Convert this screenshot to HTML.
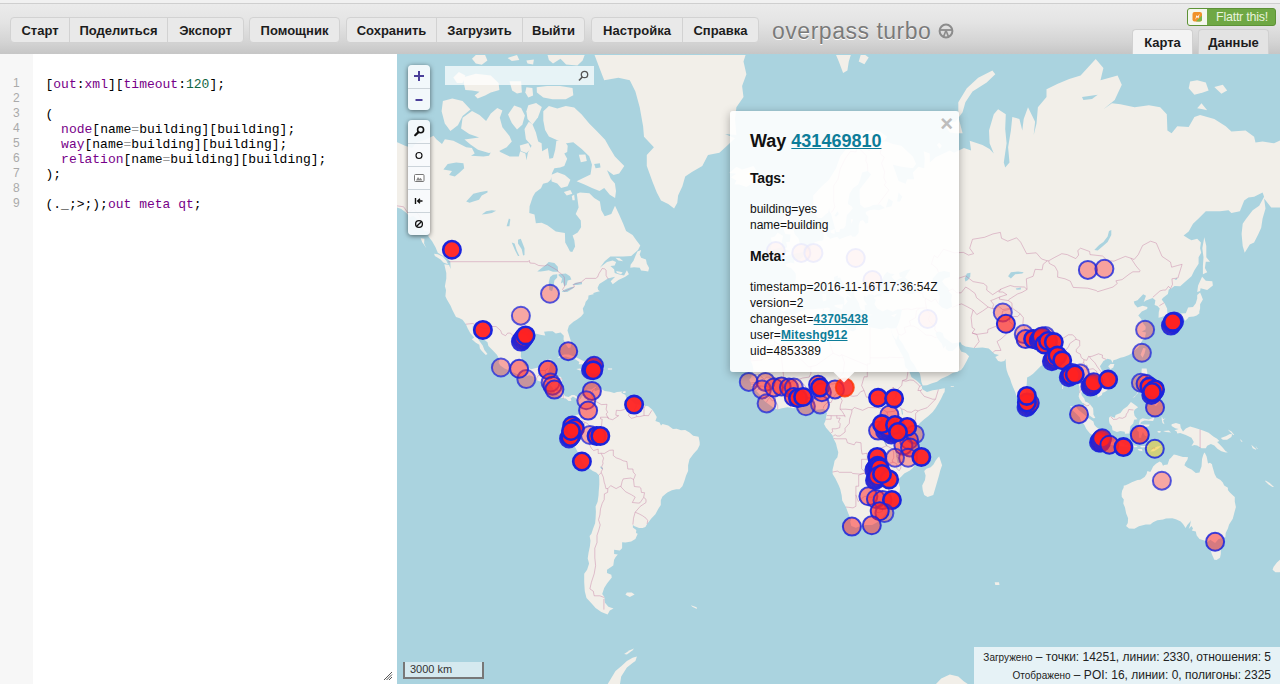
<!DOCTYPE html>
<html lang="ru"><head><meta charset="utf-8"><title>overpass turbo</title>
<style>
*{box-sizing:border-box;margin:0;padding:0}
html,body{width:1280px;height:684px;overflow:hidden;background:#fff;font-family:"Liberation Sans",sans-serif;}
#hdr{position:absolute;left:0;top:0;width:1280px;height:54px;background:linear-gradient(#f1f1f1 0,#f1f1f1 3px,#cfcfcf 3px,#cfcfcf 4px,#ebebeb 4px,#e4e4e4 22px,#d4d4d4 42px,#c6c6c6 54px);}
.grp{position:absolute;top:17px;height:26px;display:flex;border:1px solid #d2d2d2;border-radius:4px;background:#e9e9e9;overflow:hidden}
.grp div{height:24px;line-height:25px;font-size:13px;font-weight:bold;color:#1c1c1c;text-align:center;border-left:1px solid #d2d2d2;white-space:nowrap}
.grp div:first-child{border-left:0}
#ttl{position:absolute;left:772px;top:16.8px;font-size:23px;line-height:28px;color:#7a7a7a;text-shadow:0 1px 0 #fff;letter-spacing:0.52px;white-space:nowrap}
#flattr{position:absolute;left:1187px;top:8px;width:89px;height:18px;border-radius:3px;background:#6fa844;border:1px solid #5d9236;overflow:hidden}
#flattr .ic{position:absolute;left:0;top:0;width:19px;height:16px;background:#f4f7ee}
#flattr span{position:absolute;left:21px;top:0;width:66px;transform:scaleX(.96);text-align:center;font-size:13px;line-height:16px;color:#e9f3dd;white-space:nowrap;letter-spacing:-0.25px}
.tab{position:absolute;top:29px;height:25px;border-radius:4px 4px 0 0;font-size:13px;font-weight:bold;line-height:25px;text-align:center;color:#1c1c1c;border:1px solid #d0d0d0;border-bottom:0}
#ed{position:absolute;left:0;top:54px;width:397px;height:630px;background:#fff}
#gut{position:absolute;left:0;top:0;width:33px;height:630px;background:#f7f7f7}
#ln{position:absolute;left:0;top:22px;width:33px;font-size:12px;line-height:15px;color:#aaa;white-space:pre;font-family:"Liberation Sans",sans-serif}
#ln div{padding-left:13px}
#code{position:absolute;left:45.5px;top:22.7px;font-family:"Liberation Mono",monospace;font-size:13px;line-height:15px;color:#000;white-space:pre}
.k{color:#708}.n{color:#164}.o{color:#999}
#map{position:absolute;left:397px;top:54px;width:883px;height:630px;background:#aad3df;overflow:hidden}
#map svg.m{position:absolute;left:0;top:0}
.ctl{position:absolute;left:11px;width:22px;border-radius:4px;background:rgba(248,251,253,0.92);box-shadow:0 1px 5px rgba(0,0,0,0.55)}
.ctl div{height:22.5px;border-top:1px solid #ccd4da;position:relative}
.ctl div:first-child{border-top:0}.c2 div{height:23px}
#srch{position:absolute;left:48px;top:11px;width:149px;height:19px;background:rgba(255,255,255,0.72)}
#scale{position:absolute;left:6px;top:607px;width:81px;height:17px;border:2px solid #777;border-top:0;background:rgba(255,255,255,0.5);font-size:11px;line-height:15px;padding-left:5px;color:#333}
#stats{position:absolute;right:0;bottom:0;width:306px;height:37px;background:rgba(255,255,255,0.7);font-size:12px;color:#222;text-align:right;padding:2px 9px 0 0;line-height:17.5px;white-space:nowrap}
#stats small{font-size:10px}
#pop{position:absolute;left:333px;top:56px;width:229px;height:261px;background:rgba(255,255,255,0.9);border-radius:3px;box-shadow:0 2px 10px rgba(0,0,0,0.3);color:#111;font-size:12px;line-height:16px}
#pop h2{position:absolute;left:20px;top:18.6px;font-size:18px;line-height:22px;font-weight:bold;letter-spacing:0px;white-space:nowrap}
#pop h3{position:absolute;left:20px;font-size:14px;line-height:16px;font-weight:bold;letter-spacing:-0.2px}
#pop a{color:#0d7d99;font-weight:bold;text-decoration:underline}
#pop p{position:absolute;left:20px;white-space:nowrap}
#pop .x{position:absolute;right:6px;top:4.5px;font-size:22px;font-weight:bold;color:#bdbdbd;line-height:16px}
#tip{position:absolute;left:437px;top:317px;width:20px;height:10px;overflow:hidden}
#tip i{position:absolute;left:3px;top:-7px;width:14px;height:14px;background:rgba(255,255,255,0.9);transform:rotate(45deg);box-shadow:0 3px 14px rgba(0,0,0,0.4)}
</style></head><body>
<div id="hdr">
 <div class="grp" style="left:10px"><div style="width:58px">Старт</div><div style="width:98px">Поделиться</div><div style="width:76px">Экспорт</div></div>
 <div class="grp" style="left:249px"><div style="width:89px">Помощник</div></div>
 <div class="grp" style="left:346px"><div style="width:89px">Сохранить</div><div style="width:86px">Загрузить</div><div style="width:62px">Выйти</div></div>
 <div class="grp" style="left:591px"><div style="width:90px">Настройка</div><div style="width:76px">Справка</div></div>
 <div id="ttl">overpass turbo</div>
 <svg style="position:absolute;left:937px;top:22px" width="18" height="18" viewBox="0 0 18 18"><circle cx="9" cy="9" r="6.4" fill="none" stroke="#8c8c8c" stroke-width="2"/><path d="M3 8h12" stroke="#8c8c8c" stroke-width="1.8" fill="none"/><path d="M9 8.5L6.6 14.5M9 8.5L11.4 14.5" stroke="#8c8c8c" stroke-width="1.7" fill="none"/></svg>
 <div id="flattr"><div class="ic"><svg width="19" height="16" viewBox="0 0 19 16"><rect x="4.5" y="3" width="9.5" height="9.5" rx="2" fill="#f0912a"/><path d="M14 6.5v4a2 2 0 0 1-2 2H8z" fill="#7ab648"/><path d="M7.3 10.8L8.4 6.2L9.8 7.6L11.6 4.8L10.4 9.4L9 8z" fill="#fff"/></svg></div><span>Flattr this!</span></div>
 <div class="tab" style="left:1132px;width:61px;background:#f3f3f3">Карта</div>
 <div class="tab" style="left:1198px;width:71px;background:#e3e3e3">Данные</div>
</div>
<div id="ed"><div id="gut"></div>
<div id="ln"><div>1</div><div>2</div><div>3</div><div>4</div><div>5</div><div>6</div><div>7</div><div>8</div><div>9</div></div>
<div id="code">[<span class="k">out</span>:<span class="k">xml</span>][<span class="k">timeout</span>:<span class="n">120</span>];

(
  <span class="k">node</span>[name<span class="o">=</span>building][building];
  <span class="k">way</span>[name<span class="o">=</span>building][building];
  <span class="k">relation</span>[name<span class="o">=</span>building][building];
);

(._;&gt;;);<span class="k">out</span> <span class="k">meta</span> <span class="k">qt</span>;</div>
<svg style="position:absolute;left:383px;top:617px" width="10" height="10" viewBox="0 0 10 10"><path d="M1 9L9 1M3.5 9L9 3.5M6 9L9 6" stroke="#555" stroke-width="1" fill="none"/></svg>
</div>
<div id="map"><div style="position:absolute;left:0;top:1px;width:883px;height:629px">
<svg class="m" width="883" height="629" viewBox="0 0 883 629"><g fill="#f2efe9"><path d="M-75.9,114.6 -58.8,107.5 -67.3,96.2 -44.6,73.9 -30.4,77.4 -13.3,82.5 0.9,87.5 8,90.7 15.2,93.1 19.4,87.5 29.4,84.2 36.5,80.8 39.3,84.2 45,89.1 47.9,84.2 56.4,85.8 69.2,92.3 74.9,93.1 77.7,98.5 74,100.8 86.3,101.6 92,100.8 94.8,95.4 100.5,93.9 103.3,97 112.7,101.6 121.8,101.6 123.2,96.2 128.4,98.5 129.5,105.3 130.9,97.8 134.6,90.7 128.9,84.2 127.5,73.9 131.8,66.7 135.5,69.4 138.9,77.4 141.2,86.6 144.6,88.3 145.1,96.2 150.8,93.1 152.3,103.8 156,103.1 158.2,94.7 159.4,85.8 167.3,85.8 170.7,90.7 170.2,97 167.3,98.5 170.2,103.8 167.3,111.1 163.1,112.5 157.4,113.2 155.1,118.1 153.7,124.8 150.8,127.4 146,128.7 144,133.2 138.3,137.6 135.8,141.8 132.6,151.2 132.3,158 137.5,159.6 138.9,168.2 144.6,167.7 150.3,170.3 158.8,176.4 167.9,177.9 168.2,187.6 170.7,191.9 173,196.5 175.3,196.9 178.1,191.4 177.3,185.2 175.6,180.4 180.7,177.4 184.1,172.3 183.8,165.6 178.7,159.1 181.6,152.4 179.8,138.8 183,137.6 192.4,138.2 197.2,143 202.9,146.6 204.3,155.2 207.7,161.3 214.3,159.1 218,150.7 221.9,159.1 226.2,168.7 229.1,175.9 235.6,179.9 239.3,185.2 243.3,190.5 241,195.1 234.2,201 226.2,201.4 213.4,201.4 207.7,206.2 202.9,212.7 200,215.6 204.3,211.4 210,207.1 215.7,205.4 219.1,207.1 217.7,210.5 213.4,211 217.1,214.3 217.7,218.1 221.4,219.3 227.1,220.5 229.9,215.2 231.9,219.3 227.9,222.1 221.4,225 215.7,229.3 213.7,226.2 218.2,221.7 214.8,222.6 210.9,223.4 206.3,226.6 202.3,228.9 200.6,232.8 201.2,235.1 202.9,236.3 199.5,237 195.8,238.2 197.2,238.9 191.5,240.4 191.2,243.8 188.7,246.7 187.8,250 185.8,253.6 186.7,258.2 184.1,261.6 180.1,264.4 176.4,266.8 171.9,270.8 170.5,275.5 172.7,282.4 174.4,287.8 173.6,292.6 171.3,292.9 169.3,290.1 166.5,284.6 166.8,280.7 163.6,277.5 158.8,278.5 155.7,276.2 151.1,276.2 147.1,276.8 148.3,280.4 144.3,280.1 139.7,278.8 135.2,278.5 131.5,280.4 126.1,284.3 125.2,289.1 124.1,295.1 123.8,301.6 125.5,306.5 128.1,311 131.8,313.1 134.1,314.3 138.9,313.1 142.3,312.5 144.6,308.9 145.1,305.9 150.3,304.4 154.5,304.4 155.1,306.5 153.1,309.8 152.3,314 150.8,317 149.4,321.2 152.3,321.5 157.4,321.5 163.1,321.5 165.3,323.8 164.5,328.2 164.2,332.6 163.9,335.5 165.9,338.4 168.2,341.3 171.6,341.9 174.7,340.1 177.3,339.9 180.7,341.9 182.1,342.4 183,344.7 180.4,346.5 179.3,343.6 175.9,341.6 173.6,343.6 174.4,345.9 171.6,345.9 168.8,343.6 165.9,343.3 163.9,342.4 161.1,339.6 157.9,338.1 157.9,335.5 154.5,331.2 152.5,329.1 148.8,328.8 144.6,327.1 139.7,325.3 136,321.5 132.3,320.3 127.5,321.8 121.8,320 117.6,317.9 112.4,315.5 107.6,313.4 103.3,310.4 101.6,307.7 102.5,304.4 99.9,299.7 95.4,295.1 91.4,291 90.5,287.2 86.3,284 82.9,280.7 80.6,274.2 75.5,271.5 76,277.5 79.7,281.4 82,285.6 85.7,290.4 87.4,295.1 90.5,299.1 88.8,300.1 84.6,295.7 82.9,293.5 82.3,289.7 78.9,287.8 76,285.3 74.9,284.3 77.2,282.4 73.2,278.1 70.6,273.2 68.9,269.2 65.5,264.7 62.1,263 59,262 55.5,255.3 53.6,250.7 49.9,244.5 48.4,241.2 49,235.1 47.9,231.3 49.3,223.4 49.3,218.1 47.3,209.3 52.1,210.1 53.6,213.9 53.3,206.7 51.3,204.5 47,201.4 40.8,197.8 38.5,192.3 35.1,186.2 31.4,181.4 31.7,176.4 27.1,175.9 25.1,171.3 21.7,166.1 16.6,160.7 13.2,162.3 9.5,158 4.3,154.1 -0.5,152.4 -13.3,146.6 -24.7,155.2 -36,163.4 -53.1,176.4 -67.3,181.4 -67.3,152.4Z"/><path d="M180.4,346.5 182.1,342.4 183.5,344.2 185,341.6 187,339.6 187.2,337 189.2,335.2 190.9,334.6 194.4,334.4 196.6,332.9 199.2,331.5 198.3,334.1 197.5,335.5 198.6,336.1 202.3,334.4 202.9,332.3 204.3,334.1 207.7,336.1 212.8,336.7 217.1,338.1 220,337 225.6,336.4 224.2,337.8 228.5,339.9 229.1,342.7 231.9,343.6 235.6,346.5 238.4,349.3 245.6,350.2 251.2,351.3 254.9,354.2 256.9,357 259.8,361.9 258.4,366.1 262.6,367.6 264,370.4 265.5,369 271.2,370.4 276,374.1 279.7,373.8 284,375.3 288.2,375 292.5,377.5 296.2,380.7 301.6,381.8 302.7,387.2 302.7,390.1 300.5,394.4 296.8,398.5 292.5,404.3 291.1,410.2 291.1,416.1 289.1,420.6 287.4,426 285.4,431.2 282.5,434.3 279.1,434.3 274.9,435.2 270.3,437.4 265.5,441.4 263.8,445.2 263.8,450 261.2,453.9 258.4,459.2 254.1,463.8 250.1,468.9 248.4,472 245.6,473 242.1,473 237.6,471.3 235.9,469.9 235.9,472.4 239.3,475.1 239,477.9 240.7,478.7 238.4,484 234.2,486.6 228.5,487.6 225.1,487.3 225.1,493.2 222.8,495.5 217.1,494.7 217.1,498.9 220.8,499.6 218.5,502.3 217.1,504.7 216.3,510.6 210,514.7 210,518 214.3,519.7 214.8,522.6 210,528.6 207.2,533 205.2,538.9 207.4,542.1 207.7,545 208,547.8 211.4,551.7 216.5,553.6 212.8,555.6 210.6,559.6 204.3,557.1 198.6,553.1 194.4,548.3 189.5,543.1 187.8,536.2 187.2,527.3 187.2,518.8 190.1,514.7 192.1,508.6 190.7,503.5 191.5,498.1 192.9,491.3 193.5,485.8 192.6,481.1 194.4,478.7 195.8,474.4 198.1,468.2 198.6,463.2 198.9,456.5 198.6,451.6 200.6,446.8 201.5,440.5 201.8,435.8 202.3,429.6 202.3,425.1 202,420.3 199.2,417.6 195.8,416.1 191.5,413.1 187.2,410.2 185,407.2 184.4,404.3 182.4,401.4 180.7,397 178.7,393.3 176.7,389.8 174.7,386.4 171.6,384.1 170.7,380.4 173,377 174.4,376.1 175,374.1 172.2,373.5 171.9,370.1 173,368.1 174.4,365.6 175.9,364.2 177.9,362.7 178.7,359.9 181.6,359.6 182.4,356.2 181.6,351.3 181.8,348.5Z"/><path d="M277.1,153.5 271.2,148.9 264,145.4 259.8,137.6 255.5,126.8 249.8,111.1 249.8,100.1 256.9,92.3 247,81.7 246.1,71.2 242.7,52.3 238.4,36.6 232.8,25.2 221.4,22.8 207.2,25.2 200,6.6 194.4,-8.6 194.4,-47.3 350.8,-47.3 350.8,-7.1 346.5,6.6 349.4,19.2 345.1,31 346.5,42 339.4,52.3 338,63.9 339.4,80 328,79.1 338,83.3 330.9,89.9 322.4,97.8 311,100.1 305.3,111.1 295.3,116.7 288.2,121.5 285.4,131.3 281.1,140.6 280.3,147.8Z"/><path d="M332.3,118.1 339.4,111.8 345.1,114.6 356.5,111.1 360.8,118.1 363.6,121.5 359.3,126.1 349.4,131.9 342.3,129.4 337.4,129.4 339.4,125.5 333.7,122.2 339.4,118.8Z"/><path d="M51,209.3 46.4,207.5 43.6,204.5 37.9,201 37.1,198.7 40.8,199.2 45.6,201.4 49.3,205.4Z"/><path d="M29.4,193.2 25.1,187.1 23.7,183.3 27.4,183.8 27.1,188.6Z"/><path d="M233.3,212.7 237,212.2 242.7,212.7 244.1,215.6 248.4,216 251.2,216.4 252.1,213.1 249.8,208.8 249,204.5 244.1,202.7 242.7,199.6 244.1,195.1 240.4,196.5 238.4,201 236.5,205.8 233.6,209.7Z"/><path d="M218.5,202.7 222.8,203.2 226.2,206.2 221.4,205.4Z"/><path d="M219.1,216 225.6,217.2 224.2,219.3 220,218.1Z"/><path d="M160.5,303.1 163.1,300.7 167.3,299.4 171.6,299.4 175.9,301 181.6,303.4 186.4,305.9 190.9,308.3 188.7,309.2 181.6,309.2 182.4,307.1 178.7,304.4 173,302.8 168.8,301.6 164.5,302.2Z"/><path d="M190.4,313.7 194.4,314.3 198.1,315.8 201.5,314 206.9,314.3 207.4,312.8 203.5,311 200,309.2 194.9,309.2 193.2,309.8 195.8,312.8Z"/><path d="M179.3,314 183,315.5 185.3,314.9 183,313.4Z"/><path d="M210.9,314.6 215.1,314.6 215.1,313.4 210.9,313.4Z"/><path d="M225.9,338.1 228.5,338.1 228.5,336.1 226.2,336.4Z"/><path d="M228.5,539.8 232.8,542.1 237.6,539.4 234.7,537.5 229.9,537.5Z"/><path d="M293.9,550.2 299.6,552.2 299.9,554.1 295.3,551.7Z"/><path d="M239.9,601.4 235.6,602.7 229.9,605.9 224.2,611.2 218.5,615.9 214.3,622.9 210,630.2 208.6,641.7 231.3,641.7 222.8,630.2 224.2,621.5 229.9,612.5 235.6,607.9 238.4,605.9Z"/><path d="M227.1,598.9 232.8,595.2 237,593.4 235.6,595.2 229.9,599.5Z"/><path d="M535.7,632.4 544.2,623.6 552.8,619.4 561.3,621.5 567,626.5 572.7,630.2 572.7,649.8 535.7,649.8Z"/><path d="M416.2,140.6 424.8,131.3 431.9,124.8 439,113.2 443.2,101.6 450.4,92.3 457.5,84.2 467.4,77.4 476,74.8 483.1,76.5 490.2,81.7 487.3,85.8 495.9,89.1 504.4,90.7 515.8,101.6 519.2,108.9 515.8,113.2 504.4,111.8 495.9,109.7 500.1,121.5 501.6,126.1 508.7,128.7 510.1,124.2 517.2,124.2 515.8,117.4 521.5,111.8 527.2,113.2 527.7,103.1 526.6,96.2 532.8,98.5 532.8,107.5 538.5,102.3 552.8,95.4 557,97.8 567,93.1 574.1,95.4 572.7,85.8 585.5,89.9 592.6,93.9 596.8,98.5 592.6,88.3 592,75.6 596.8,59.2 601.1,54.3 608.8,59.2 608.2,73.9 609.6,88.3 606.8,107.5 608.2,112.5 612.5,107.5 611.1,92.3 613.9,75.6 615.3,62 622.4,63.9 625.3,75.6 626.7,63.9 631,52.3 638.1,66.7 636.7,80 639.5,68.5 640.9,52.3 649.5,42 649.5,34.3 660.8,28.7 672.2,24 683.6,20.4 698.7,3.9 706.4,13 703.5,25.2 720.6,20.4 724.8,29.8 717.7,45.1 706.4,54.3 714.9,48.2 723.4,49.3 737.6,52.3 751.9,50.3 763.2,52.3 769.8,59.2 770.4,75.6 774.6,78.2 780.3,71.2 791.7,72.1 797.4,62 803.1,60.1 817.3,63.9 828.7,71.2 834.4,76.5 848.6,75.6 857.1,81.7 858.5,87.5 865.6,86.6 877,88.3 885.6,84.2 902.6,85.8 914,93.9 919.7,114.6 914,121.5 905.5,137.6 891.2,146.6 885.6,152.4 874.2,152.4 867.1,143.6 868.5,153.5 865.6,163.4 864.2,172.8 861.4,178.9 857.1,187.6 852.8,189.5 847.7,197.8 845.7,190.9 844.6,178.9 845.7,168.7 848.6,164.5 855.7,155.2 862.2,150.7 867.1,141.8 865.6,137.6 857.1,141.8 851.4,142.4 847.2,145.4 842.9,156.3 834.4,158 831.5,155.2 823,156.3 815.9,156.3 808.8,156.3 801.6,163.4 796,168.7 791.7,176.4 786.6,180.4 791.7,183.8 794.5,185.2 800.2,183.8 803.9,187.6 803.1,193.2 804.2,197.8 801.6,202.3 801.6,208.8 797.4,215.2 794.5,221.3 788.8,226.2 783.2,231.3 777.5,230.9 774.6,233.2 771.8,234.4 770.9,238.9 766.1,242.7 764.7,244.5 767.5,248.2 770.1,253.6 770.4,258.9 768.9,260.3 764.7,262 761.5,262.7 761.8,257.1 762.7,253.6 760.4,251.1 757.6,250 758.4,245.3 755.6,243 749,245.6 746.7,247.1 749,240.8 746.2,239.3 740.5,245.3 736.8,246.4 737.6,249.3 740.5,252.5 745.6,250.7 750.4,252.1 750.2,253.9 744.8,256.4 741.3,260.6 744.2,264.1 746.2,268.5 748.7,271.8 748.5,274.5 744.8,276.5 749,277.5 747.9,282.4 745.3,285.6 742.5,290.4 740.5,292.9 737.6,295.4 734.8,298.2 732,300.1 726.8,301.9 723.4,302.8 719.2,304.4 716.3,305.3 715.7,308 714,304.7 710.6,303.7 706.4,305.9 705.5,307.4 702.9,311.3 704.9,315.5 707.8,319.4 710.6,321.5 712.6,326.8 712.9,331.2 712,334.1 707.8,337 705.5,337.8 704.9,339.9 700.7,342.4 700.1,338.4 696.4,336.7 693.6,332.6 689.3,330.6 687.9,328.2 686.4,329.7 685.9,334.1 684.2,338.4 685,340.7 687.3,343.6 688.2,346.5 690.7,347.6 693,349.3 696.1,353.3 696.4,357 696.4,359.6 698.4,363 696.4,363.3 693.6,361.3 690.1,358.7 688.4,355.6 687.3,351.3 687,348.5 685.6,347.9 682.7,344.2 681.6,341.3 682.5,337 682.5,332.6 681.3,327.7 680.2,323.8 679.6,319.4 677.3,317.9 673.6,321.5 670.2,320.9 670.8,316.4 669.4,311.9 668,308.9 664.5,305.9 663.1,301.9 659.4,301.3 655.2,303.4 649.5,304.4 648.9,307.4 646.6,309.5 643.8,311 640.9,314 636.1,318.8 633,320.9 630.1,322.4 629.8,328.2 629.3,332.6 629,337.5 627.3,340.4 624.4,341.6 622.6,343.9 619.6,341.3 618.2,337 616.2,332.6 614.5,328.2 613.1,323.8 611.1,319.4 609.6,314.9 609.1,311.9 608.8,307.4 608.5,303.7 607.4,305.9 604,306.8 601.1,305.9 598.3,301.9 602,300.1 597.7,299.1 596,297.6 593.4,295.1 591.7,293.5 585.5,292.6 577.2,292.9 568.4,291.6 564.7,289.4 563.6,287.2 558.4,288.1 555.6,288.5 551.3,285.6 547.1,282.4 545.6,278.1 542.8,276.8 540.8,276.8 538.5,278.1 540,282.4 542.8,286.2 544.8,288.8 546.5,293.5 548.5,290.4 548.8,294.1 551.3,296 555.6,296 559.3,292.6 561.9,289.7 562.7,293.5 564.1,296.6 568.7,297.9 572.1,301.3 569.3,306.8 566.4,311.9 564.1,314.9 559.3,317 555.6,317.9 550.5,320.9 544.2,323.8 540,326.8 534.3,328.5 530,330.3 525.7,330.6 524.3,326.8 523.7,322.4 522.9,318.5 520,314.9 517.2,309.8 513.5,305 511.5,298.2 508.1,293.5 505.8,288.8 502.1,284 501.3,279.1 499.6,284 499.3,284.9 497.3,282.4 494.7,277.8 493.9,273.5 499.3,273.2 501.6,268.1 503.5,262.3 504.4,257.1 505,254.6 500.1,254.6 495.9,256.8 490.2,254.3 485.9,256.4 480.2,253.6 477.4,248.9 478.8,244.9 476.5,242.7 480.2,241.2 484.5,241.2 484.5,238.5 491.6,238.2 497.3,235.1 501.6,235.1 505.8,237.8 510.1,238.9 515.8,238.9 520.3,236.7 520,233.2 515.8,229.3 511.5,225.8 508.1,222.6 510.7,218.1 513.5,214.3 508.7,215.2 502.1,218.1 503,222.1 505.8,222.6 502.4,223.8 498.7,225.8 497.3,225 494.4,221.7 497.6,219.3 493,218.5 490.2,216.8 487.3,220.1 486.2,222.6 483.4,227.3 481.6,231.3 481.1,233.2 482.2,237 484.5,238.2 480.2,238.9 477.4,240.8 476,239.7 471.4,239.3 469.7,241.9 467.1,240.8 466.6,244.5 468,246.4 470.3,250 467.7,250.3 468,255.3 465.7,255.3 463.7,254.3 462.3,250.7 462,248.5 459.5,244.1 457.2,240.8 457.5,236.3 454.6,233.2 447.5,229.3 444.7,225.4 443.2,222.6 440.7,223 441,220.5 437,222.1 437.3,226.6 440.7,229.3 442.4,233.6 447.5,235.5 450.4,238.9 454.6,242.3 454.1,243.4 450.4,240.8 448.9,243.8 450.6,246.4 448.9,248.9 446.7,250.3 447.5,247.4 446.7,242.7 443.2,240.4 441.8,238.9 437.6,237 434.7,233.6 431.9,231.3 431,227.7 427.3,225.8 423.3,228.1 419.1,230.9 414.8,229.7 411.1,230.5 410.5,233.2 411.1,235.5 408.3,237.4 404,239.7 401.1,244.5 402.6,247.4 400.6,248.9 400,251.4 396.3,254.3 389.5,254.6 386.6,256.8 384.1,255 382.1,252.9 376.7,253.6 377,248.2 375,247.1 376.7,241.9 377.3,238.2 376.7,234.4 375.5,231.3 379.2,228.5 385.5,228.9 391.2,229.3 396.9,229.7 398.6,225.4 398.9,220.9 398.6,218.5 395.7,214.8 394,213.1 389.5,211.8 388.3,209.3 393.5,207.5 397.4,208.4 396.9,203.6 398.6,204.9 402.6,204.5 406.3,201.8 406.6,198.3 411.1,196.5 413.4,193.2 415.4,188.6 419.1,186.7 422.5,185.7 425.3,185.7 426.5,183.8 426.5,176.4 425,170.8 426.5,168.2 431.9,165 431.3,170.8 432.7,172.3 430.4,176.4 429.3,178.9 430.4,181.4 433.3,183.8 436.1,182.8 440.4,181.8 442.4,184.3 447.5,182.3 454.1,179.9 455.5,181.8 458.3,181.8 460.3,179.4 461.7,177.4 461.7,169.8 463.2,166.1 466,165 468.8,168.7 471.1,167.7 471.4,161.8 468.8,159.1 468.8,156.9 472.3,155.2 477.4,154.6 481.6,155.2 487.9,152.9 483.1,149.5 476,150.1 472.8,151.8 467.4,152.9 463.2,149.5 462.6,141.8 462.6,134.5 466,130 471.7,122.8 474,119.5 470.8,116 465.1,117.4 463.2,124.8 461.2,129.4 456,133.2 452.6,138.8 451.2,146.6 450.9,148.9 454.6,151.2 455.8,153.5 453.5,156.3 449.8,160.2 449.2,166.1 448.6,170.8 446.9,173.4 443.2,173.9 442.4,176.9 439,176.9 437.8,172.8 436.1,166.6 434.1,159.1 432.4,156.3 432.2,152.9 431.3,157.4 429,159.1 424.8,162.9 421.1,162.9 417.9,159.1 416.5,152.4 416.2,143.6Z"/><path d="M494.7,277.8 493.9,273.5 490.2,272.5 484.5,274.5 478.8,273.2 473.1,272.2 467.4,268.5 463.2,268.1 458.9,270.8 458.9,274.8 456,276.5 450.4,274.2 445.5,269.8 439.5,267.8 434.7,266.8 431.9,265.1 430.4,262.3 433.3,258.9 432.2,255.3 433.3,253.6 430.4,252.5 426.2,253.6 421.9,253.6 416.2,254.3 410.5,254.3 404.8,255.7 399.2,258.2 395.7,260.3 393.5,259.6 389.2,259.9 386.6,257.5 384.9,257.8 382.7,264.1 379.2,266.4 375.5,269.2 374.1,272.5 374.4,275.8 373,279.8 369.9,282.4 365,284.6 363.6,288.8 360.8,290.4 359.3,295.1 356.5,297.6 354.2,302.2 353.6,305.9 355.1,308.9 355.9,311.9 356.5,314.9 355.1,319.4 354.2,322.4 352.2,324.7 354.2,328.2 354.2,331.2 356.5,333.2 359.3,336.1 363,339.9 364.5,342.7 367.9,346.2 370.7,348.5 375.5,351.9 380.4,354.5 384.9,353.3 390.6,352.2 396.3,353.3 402,351 405.4,349.6 409.1,349 411.7,348.8 414.8,349.3 417.1,351.9 419.1,354.8 421.9,354.5 425.6,353.9 427.3,354.2 429,355.9 429.9,358.5 429.3,361.3 428.7,364.2 428.5,365.6 427,369 429,372.7 431.9,376.1 435.6,380.4 436.7,384.1 439,388.4 439.8,392.1 441.3,397.6 440.4,402.3 437.6,405.8 436.7,410.2 435.6,414.6 435.6,419.1 438.4,423.6 441.8,430.6 443.2,433.9 444.7,440.5 445.2,445.5 448.9,452 451.2,458.2 454.1,464.8 453.2,466.5 454.3,471 458.9,472.7 464.6,470.6 468.8,469.9 475.1,469.9 480.2,467.2 483.1,464.8 487.3,460.5 490.2,456.2 493.6,452.6 495.3,446.8 495.3,443.3 497.3,441.1 502.4,438.3 503,432.7 501.6,428.1 501,424.5 504.4,421.5 507.2,418.5 512.9,415.5 515.8,413.1 518.1,409.6 517.2,404.3 517.2,398.5 516.9,396.5 515.2,392.7 513.8,388.4 513.8,386.4 512.4,384.1 513.5,380.4 514.9,378.4 516.6,374.7 520,371.8 522.9,368.1 527.2,364.2 531.1,361.3 535.7,357 538.5,353.3 541.4,348.5 544.2,343.6 546.5,338.4 547.6,337 547.9,333.2 545.6,333.5 541.4,334.6 535.7,335.2 530,337 525.7,334.6 524.9,333.2 524.9,331.2 522.9,328.8 519.2,325.3 515.8,323 514.4,322.1 512.9,317.9 511.5,314.9 508.7,312.5 507.8,310.1 507.5,305.9 506.7,302.8 503.5,297 501.6,293.5 498.7,288.5 498.1,285.6 495.9,281.4Z"/><path d="M542.2,401.4 545.1,410.2 544.2,412.8 543.1,416.1 542.2,419.7 539.4,429.6 536.3,439.9 530.6,442.1 527.2,439.9 525.7,434.9 525.2,430.6 528,425.1 528.6,420.6 527.2,416.1 529.4,413.7 533.7,412.2 536.5,409.6 538.5,405.8 540.8,402.8Z"/><path d="M726.8,430.6 726.6,432.7 725.1,435.8 724.6,438.9 724.8,442.1 726.8,444.6 726.3,448.4 728,452.6 729.1,458.2 731.1,463.2 730.8,467.9 729.1,471 732,473.4 737.4,473.7 741.9,471.3 748.7,469.6 753.3,469.6 756.1,467.2 760.4,465.2 766.1,464.5 768.9,463.5 775.2,463.2 778.9,464.2 783.7,466.5 786,468.9 788.6,473 790.3,469.9 793.4,466.5 794,465.2 793.1,469.9 791.7,474.1 794.5,471 796,473.4 794.8,475.5 798.8,476.5 799.7,480.4 802.5,484 807.3,485.5 810.2,486.9 813.6,484.7 814.4,485.5 818.1,488 821.6,484 828.4,482.2 828.7,477.9 830.9,473.4 832.1,469.6 835.8,463.8 837.2,458.2 838.9,452 837.8,446.8 837.8,442.1 836.6,441.1 832.9,437.4 830.9,434.9 830.9,432.7 827.2,430.6 825.8,427.5 823.5,425.1 819.6,422.7 817.6,419.1 816.7,415.8 815.3,411 815,409.3 813,407.8 811,408.4 810.2,404.3 809.6,401.4 808.2,398.5 807.3,397.6 806.2,399.9 805.1,403.7 804.8,407.2 804.5,411.6 803.1,415.2 802.5,417.6 798.8,417.9 794.5,414.6 790.3,412.5 787.4,410.2 788.6,407.2 790.3,404.9 791.1,402.3 788.8,402 786,402 781.7,400.8 779.2,399.9 776.9,399.4 774.6,402 774.1,402.8 772.3,404.3 770.6,409.6 766.9,409.9 766.1,411 764.7,407.8 762.7,406.6 759,408.7 756.1,411.6 754.7,414.6 753.3,417 750.4,416.1 749.6,419.1 747.6,422.1 743.3,424.8 740.5,425.1 734.8,427.2 731.4,429 728,430.6Z"/><path d="M813.6,493.9 817.3,495.5 821.6,494.7 823.8,494.7 823.8,498.9 823,502.7 821,503.9 819.6,505.1 817.3,504.7 815,499.6 813.6,495.8Z"/><path d="M875.6,514.7 878.4,517.2 882.7,517.2 888.4,512.7 894.1,504.7 897.8,498.1 893.2,493.2 889.8,498.1 885.6,502.7 879.9,507.4 876.5,511.9Z"/><path d="M868.5,425.4 872.8,428.1 877,432.1 875.6,432.1 871.3,429.3 868.2,426.3Z"/><path d="M774.6,369.3 778.9,368.1 783.2,369.3 783.7,372.7 786,376.4 788.8,373.5 793.1,371.6 797.4,372.7 803.1,374.4 807.3,376.1 811.6,377.8 816.7,381.8 820.1,383.8 822.4,386.1 820.1,387 823,389.8 825.8,392.7 828.7,396.2 830.9,397.3 828.7,397.6 824.4,396.2 820.7,394.1 817.3,390.4 813.9,389 810.2,390.7 808.8,393.3 804.5,393.3 800.2,390.4 797.4,390.1 794.5,391 796.8,387 794.5,382.7 788.8,380.1 783.2,378.1 780.3,378.4 779.7,376.4 777.5,375.3 781.7,374.1 778.3,373.3 774.6,371Z"/><path d="M823.8,383 828.7,381.2 832.9,379 835.2,379.2 834.4,382.1 830.1,384.7 825.8,384.7Z"/><path d="M830.9,374.4 834.4,376.4 837.2,379.8 836.3,380.1 832.9,376.7Z"/><path d="M842.9,384.1 845.7,386.4 844.3,386.7Z"/><path d="M854.3,389.8 858.5,393.6 859.4,395 855.7,393.3Z"/><path d="M858.5,390.7 860.8,394.1 860,394.1Z"/><path d="M712,362.7 713.5,361.3 717.7,362.7 718.6,359.9 723.4,357.9 726.3,354.2 730.5,351.3 733.9,347 736.8,349 741.1,352.2 737.6,354.8 736.8,357 737.6,360.7 740.5,364.2 737.1,364.7 736.2,368.4 733.4,371.3 732.8,375.5 732,378.4 728,378.7 727.7,376.7 723.4,376.1 720,377 715.5,375.3 714.9,371.3 712.6,368.4 712,366.1Z"/><path d="M673.1,351 679.3,352.2 681.6,355 685.9,358.5 688.7,360.7 692.1,363.6 696.4,366.4 697.3,369.8 699.2,372.1 703.5,375 703.5,378.4 702.9,383.5 699.5,383.5 697.8,381.2 693,378.4 689.3,374.1 687.3,369.8 684.2,366.1 682.7,362.2 678.5,357.9 675.1,355Z"/><path d="M701.2,386.4 703.8,383.8 710.6,385.8 716.3,386.7 717.7,385.2 722.6,386.7 727.4,389 727.7,391.8 719.2,390.7 710.6,389.3 704.9,388.1Z"/><path d="M728,390.1 731.1,390.4 730.5,392.1 728.5,391.6Z"/><path d="M732,390.7 733.9,390.7 733.4,392.4 732,392.1Z"/><path d="M734.2,391 737.6,390.4 740.5,391 739.9,392.1 734.8,392.7Z"/><path d="M742.8,391 746.2,391 751.9,390.7 751.3,391.8 744.8,392.4Z"/><path d="M740.5,394.1 744.8,394.1 745.6,396.2 741.9,395.6Z"/><path d="M753.3,396.5 756.1,393.6 760.4,391.6 764.1,391 761.8,393.3 757,396.2Z"/><path d="M742.8,364.7 745.6,363.3 751.9,364.4 757.6,362.2 756.1,365.9 747.6,365.6 743.9,367 743.3,369.3 747.6,369.6 752.7,369.6 751.9,371.3 747.9,372.1 749.9,376.1 752.4,379 751,382.1 747.9,380.7 745.9,377 744.5,380.7 744.2,382.7 741.9,382.7 741.9,377 739.9,375 741.9,369.8Z"/><path d="M764.7,361.3 766.1,364.2 768.4,363.3 766.1,365.6 767.5,369.3 765.5,367.9 764.7,364.2Z"/><path d="M766.1,376.1 771.8,375.5 774.1,377.5 768.9,377Z"/><path d="M760.4,376.1 763.8,376.1 763.2,377.8 761,377.5Z"/><path d="M744.2,320.9 744.8,313.4 749.6,313.4 750.4,317.9 747.9,322.4 749,326.8 754.7,328.2 755,330.9 751.9,327.7 748.2,327.1 745,326.2 743.3,323.8Z"/><path d="M749,347 753.3,342.4 759,339.3 761.8,344.2 761,348.5 759,351 754.7,348.5 753.3,345.3Z"/><path d="M755.6,331.2 759,332 759.5,335.5 757.6,337.8 756.4,335.5Z"/><path d="M749,333.2 751.9,334.1 752.4,338.4 750.4,339.9 749.6,337Z"/><path d="M744.8,328.2 747.6,329.1 747,331.7 745.6,331.2Z"/><path d="M735.4,343 739.1,339.9 741.9,334.6 741.1,337.8 737.6,341.9Z"/><path d="M774.3,264.1 778.9,259.2 783.2,258.5 788.8,258.2 791.1,252.5 796,252.1 798.8,248.2 800.2,243.4 800.2,240.1 803.1,237.4 804.5,240.8 805.9,244.5 803.1,249.3 803.1,253.6 802.2,257.1 802.5,258.2 799.7,260.6 796.8,261.6 791.7,262 791.1,263 788.3,265.8 786.3,263 783.2,262 778.9,263.4 774.6,264.4Z"/><path d="M771.8,265.8 774.6,264.7 777.2,267.5 775.8,272.8 773.8,274.2 772.3,270.8 770.9,267.5Z"/><path d="M778.3,266.4 780.3,264.1 784.6,263.4 783.7,265.8 780.3,268.1Z"/><path d="M800.2,237 801.1,230.5 805.1,221.7 808.8,225.8 815.3,226.2 815.9,230.5 810.2,235.1 803.6,233.2 803.1,235.9Z"/><path d="M805.9,219.3 805.9,211 806.5,202.3 805.3,193.2 807.3,182.3 809.3,190.9 809.3,202.3 813,206.7 808.8,206.7 807.9,213.1 810.2,217.2Z"/><path d="M743.6,299.7 746.2,292.9 748.7,293.5 747.6,298.2 745.6,302.8Z"/><path d="M711.2,311.3 713.5,308.9 717.4,308.9 716.3,312.5 713.5,314.3Z"/><path d="M629,344.2 630.1,339 633,342.7 634.7,346.2 634.1,348.5 631,350.2 629.3,348.5Z"/><path d="M548.5,71.2 552.8,77.4 558.4,78.2 565.6,78.2 561.3,62 561.3,47.2 569.8,33.2 581.2,22.8 595.4,15.5 598.3,19.2 589.7,27.5 575.5,36.6 568.4,47.2 565.6,57.2 558.4,66.7 551.3,66.7Z"/><path d="M433.3,-22.1 439,-0.1 441.8,6.6 446.1,18 450.4,15.5 451.8,6.6 456,-7.1 463.2,-4.3 464.6,-22.1Z"/><path d="M461.7,6.6 467.4,9.2 471.7,2.6 464.6,-2.9Z"/><path d="M680.8,-30 675.1,-14.4 686.4,-2.9 697.8,-4.3 700.7,-14.4 692.1,-30Z"/><path d="M791.7,33.2 797.4,39.8 805.9,37.6 811.6,35.5 808.8,27.5 800.2,25.2 793.1,26.4Z"/><path d="M817.3,32.1 824.4,38.7 830.1,35.5 825.8,29.8Z"/><path d="M800.2,53.3 805.9,54.3 810.2,55.3 804.5,48.2Z"/><path d="M540,89.9 542.8,93.9 544.8,90.7 542.2,87.5Z"/><path d="M385.8,202.3 393.5,199.6 406,196.9 406.8,190 402.6,188.6 401.7,183.8 397.7,178.9 396.3,173.9 393.5,173.9 396.3,165.6 390.6,165.6 393.5,160.2 387.8,160.2 384.9,166.1 386.4,173.9 388.3,178.9 393.5,179.4 392.9,186.7 389.2,187.1 390.1,191.9 387.2,194.2 393.5,196 389.2,197.8Z"/><path d="M373.6,195.1 384.4,192.3 384.9,186.2 386.1,180.9 380.7,177.4 377.8,181.4 373.6,182.8 375,187.6Z"/><path d="M437.6,250 446.1,249.3 445.2,254.6 437.6,251.4Z"/><path d="M425.3,238.9 429.3,238.9 429.3,245.6 425.9,246.4Z"/><path d="M426.5,231.7 429,231.7 428.5,237.4 426.7,235.9Z"/><path d="M468.8,258.9 476.8,259.9 470.3,260.6Z"/><path d="M493.9,260.6 500.1,258.5 497.3,262Z"/><path d="M597.7,527.3 602,527.3 602.5,530 598.3,530Z"/><path d="M553.6,330.9 557,330.9 556.7,331.7 553.9,331.7Z"/><path d="M665.7,328.2 666.5,328.5 666,334.1 665.1,333.8Z"/><path d="M513.5,383.5 514.4,384.1 514.1,385.5Z"/><path d="M433.3,175.4 437.8,173.9 437.6,178.9 433.9,177.9Z"/><path d="M453.8,164 456,164.5 454.6,168.7Z"/><path d="M45.9,45.9 55.3,43.5 65.6,45.9 73.5,54.4 65.6,60.9 60.9,70.3 53.4,75.9 47.8,68.4 44.6,56.3Z"/><path d="M65.6,62.8 75,55.9 82.5,60 89.1,66 93.8,58.5 100.3,52.9 105.4,55.5 102.8,62.8 105.4,72.2 112.5,81 114.8,86.6 109.7,92.3 102.2,96 91.9,97.9 81,94.7 73.5,89.6 67.5,84.4 82.1,82.5 72.2,79.1 64.1,73.5Z"/><path d="M111,59.6 117.2,50.6 124.1,52.9 127.9,60.4 125.3,69.8 120,74.6 114.8,67.9Z"/><path d="M131.3,50.3 139.1,48 144.8,52.1 141,62.3 135.4,69.8 130.5,64.1 129.4,56.3Z"/><path d="M122.8,90.4 131.3,88.1 134.1,93.8 129.4,97.9 123.8,96Z"/><path d="M139.7,32.3 150,30.9 163.1,30.9 175.5,33 176.3,40.3 168.8,44.3 155.6,44.3 146.3,42.4 139.9,37.5Z"/><path d="M129.4,32.3 135.4,33 136.1,40.5 131.3,42.4 128.3,37.5Z"/><path d="M112.5,26.3 124.1,26.3 124.9,37.5 120,38.6 115.1,35.6Z"/><path d="M65.6,22.5 78.8,18.8 93.8,20.6 101.6,28.1 102.4,34.9 93.8,37.5 88.1,40.5 80.6,43.5 77.6,40.5 82.5,36.8 75,35.6 68.3,34.9Z"/><path d="M56.3,22.5 61.9,16.9 68.4,20.6 65.6,28.1 60,28.1Z"/><path d="M75,3.8 78.8,0 88.1,0 90.4,5.6 84.8,9.8 78.8,8.6Z"/><path d="M110.6,3 120,0 122.3,4.9 114.8,6Z"/><path d="M129.4,5.6 136.9,4.5 136.1,9.4 130.5,8.6Z"/><path d="M150,-1.9 188.4,-1.9 185.6,5.6 180.4,10.5 169.1,9.4 163.5,3.8 156,8.6 151.9,4.9Z"/><path d="M146.3,56.3 151.9,51 160.3,53.4 168.8,51 177.2,52.5 184.7,59.6 192.2,68.4 199.7,75.9 208.1,84.8 212.3,92.3 217.9,101.6 227.3,111 222.2,118.5 216.6,120 210,115.3 213.8,123.8 217.9,128.4 219,135.9 218.1,143.1 212.8,139.7 207.2,133.1 202.5,135.9 195,133.1 187.5,129.4 179.6,126.2 184.7,123.8 193.5,119.6 195,109.7 192.2,101.3 184.7,94.1 176.3,87.2 167.8,88.5 160.3,85.3 151.9,81.6 148.1,75 146.3,65.6Z"/><path d="M153.8,120 160.3,117.2 167.8,120 173.4,124.7 170.6,131.3 164.1,133.1 160.3,128.4 154.7,126.6Z"/><path d="M181.9,99.8 188.4,99.4 189.8,105.9 183.8,107.3Z"/><path d="M166.9,136.9 173.4,135 175.3,138.8 169.7,140.6Z"/><path d="M174.8,141 177.2,139.7 177.8,145.3 175.5,145.3Z"/></g><g fill="#aad3df"><path d="M535.7,223.4 541.4,217.2 547.1,216 552.8,217.2 552.8,222.1 547.6,223.4 545.1,226.2 547.9,230.5 551.3,233.2 552.2,237 555,239.7 554.2,244.5 555,251.8 549.9,254.3 545.1,252.5 541.4,248.9 542.8,241.5 540,235.9 537.1,231.3 535.7,227.3Z"/><path d="M567.8,223.4 569.8,218.5 573.5,217.7 573.2,221.7 571,225 568.4,226.6Z"/><path d="M611.1,221.3 613.9,217.2 621,216.4 626.7,217.2 625.3,218.5 618.2,219.3 613.9,223.4Z"/><path d="M697.3,195.1 700.7,195.5 704.9,191.9 710.6,187.1 714.3,179.9 714.3,174.9 712,175.9 710.6,181.4 706.4,187.1 702.1,190Z"/><path d="M618.7,233.6 623.9,232.4 623.9,234.4 619.6,234.7Z"/><path d="M488.8,152.4 491.6,143.6 495.9,146.6 494.4,151.2Z"/><path d="M500.1,146.6 501.6,137.6 505.3,141.8 503,146.6Z"/><path d="M492.5,369.8 494.4,366.4 498.7,366.1 499.6,369.8 497.3,374.4 493,374.1Z"/><path d="M485.3,376.7 486.8,379.8 488.8,387 490.7,391.8 489,391 485.9,384.1 484.8,379.8Z"/><path d="M498.7,394.1 500.4,398.5 501.6,404.3 502.1,408.4 500.4,407.8 499.3,401.4 498.4,397Z"/><path d="M140.3,216.4 144.6,213.1 148.8,210.1 151.7,207.1 157.4,208 160.8,211.8 161.1,216.8 156,216.8 151.7,215.2 147.4,216 143.7,216.4Z"/><path d="M152.3,235.1 151.7,227.3 153.1,222.1 156,219.7 160.2,219.3 160.2,222.6 157.4,225.4 156.5,231.3 155.1,236.3Z"/><path d="M161.6,219.3 168.8,218.5 173,221.3 174.4,224.6 170.7,225.4 169.6,230.1 167.3,231.3 165.9,227.3 163.9,228.5 165.1,223.4 161.6,220.5Z"/><path d="M164.8,236.3 168.8,234 174.4,232 177.6,231.7 175.9,233.6 170.2,237 165.9,237Z"/><path d="M175,230.1 178.7,227.7 185,227 185,229.3 180.1,230.1Z"/><path d="M121,184.8 123.8,183.8 127.5,193.2 127.5,200.1 126.1,200.5 124.7,194.2 121,188.6Z"/><path d="M114.7,187.6 117.6,188.6 119.8,195.5 122.4,201 121,201 118.1,195.5Z"/><path d="M46.4,114.6 50.7,108.9 59.2,107.5 66.4,108.2 67.2,113.2 62.1,118.1 57.8,121.5 52.1,120.1 55,116Z"/><path d="M69.2,146.6 72,143.6 76.3,138.8 83.4,137 90.5,135.7 90.5,137.6 84.8,140.6 82,144.8 76.3,146.6 72.6,147.8Z"/><path d="M84.8,159.6 89.1,156.3 94.8,155.2 99.1,155.8 94.8,158 89.1,159.1Z"/><path d="M109.6,171.3 111.9,163.4 113.3,164.5 112.4,171.3Z"/><path d="M197.2,108.9 202.9,108.2 203.5,112.5 198.6,113.2Z"/><path d="M202.9,411.6 204.9,411.9 206.3,414.3 204.3,414Z"/><path d="M157.4,332.6 159.7,332.6 160.5,335.2 158.2,334.4Z"/><path d="M504.1,354.2 505.3,354.5 506.1,359.6 505,359.6Z"/><path d="M437.6,160.7 440.4,156.3 441.8,159.1 439,161.8Z"/><path d="M777.5,225 779.7,222.6 780,224.6Z"/><path d="M685,42 692.1,40.9 700.7,39.8 695,44.1 686.4,45.1Z"/></g><path d="M51.3,206.7 131.2,206.7 132.3,205.4 132.9,208.0 137.5,208.4 141.7,210.5 147.4,211.0 150.6,209.7 160.8,215.6 161.6,217.2 164.5,218.9 167.3,222.1 167.6,231.3 165.6,234.4 167.3,236.3 177.3,232.0 176.7,229.3 184.4,227.0 188.7,223.4 198.6,223.4 200.6,222.1 202.0,218.5 205.2,213.5 207.7,213.9 209.1,215.2 209.1,220.5 210.3,222.6 211.4,224.2 M-0.8,150.7 6.6,151.8 10.9,158.0 16.6,153.5 22.3,160.7 27.1,170.8 32.2,174.4 31.7,178.9 M68.9,269.2 75.7,268.5 86.3,273.2 94.2,273.2 94.2,271.5 99.1,271.5 103.6,275.5 104.8,278.8 108.5,280.7 110.7,278.1 113.6,278.1 115.6,280.4 119.0,285.6 120.1,289.1 125.5,290.7 M139.7,325.3 139.7,323.0 141.2,320.6 144.9,320.6 144.9,319.7 142.0,317.3 143.2,317.2 143.2,315.5 148.3,315.5 148.3,321.2 151.1,321.8 M148.3,315.5 150.8,313.4 M148.3,321.2 148.0,325.6 145.7,327.7 M148.0,325.6 150.3,327.1 152.5,327.4 152.3,328.8 M153.7,329.7 155.4,327.4 158.2,327.1 160.5,324.4 165.3,323.8 M158.2,335.2 161.1,335.5 163.9,335.8 M166.2,343.9 166.2,339.9 167.0,339.6 M180.4,346.5 182.4,344.5 181.8,342.4 M198.1,309.8 197.8,313.1 198.1,314.9 M199.2,333.2 195.8,335.2 194.4,340.4 195.8,343.0 196.1,345.9 200.0,347.0 204.3,349.6 210.0,349.3 209.1,354.2 210.6,357.3 209.1,359.0 211.4,363.6 M211.4,363.6 211.1,362.2 203.5,362.2 203.5,363.9 205.2,364.2 204.6,370.1 202.9,379.0 M202.9,379.0 200.9,377.8 194.6,373.8 190.4,368.4 187.8,367.3 M187.8,367.3 185.0,365.9 181.8,365.9 177.9,363.0 M187.8,367.3 187.0,371.3 180.7,375.5 179.0,376.7 177.3,381.2 174.2,379.2 173.6,376.7 M231.3,342.7 227.4,350.2 229.3,352.2 231.0,352.2 231.6,354.5 232.8,355.9 231.6,360.5 234.2,363.3 237.0,362.7 239.9,361.6 242.7,361.6 247.0,360.5 251.5,360.7 254.9,355.3 M229.3,352.2 227.4,354.5 223.4,355.6 219.4,355.3 218.8,360.2 221.7,360.7 215.7,364.7 211.4,363.6 M239.3,349.9 239.0,352.2 237.0,355.6 239.9,361.6 M248.4,350.5 247.0,353.3 247.0,360.5 M202.9,379.0 194.9,381.5 191.5,387.8 194.4,393.3 196.6,395.6 201.2,394.1 201.2,398.5 204.0,398.2 M204.0,398.2 206.6,403.1 205.7,406.3 206.0,408.7 204.6,411.9 205.7,414.0 204.0,417.0 204.3,417.6 201.8,420.0 M204.3,417.6 206.3,422.1 207.2,427.2 208.0,429.6 208.9,433.6 210.9,433.6 M210.9,433.6 213.7,430.6 219.1,433.6 223.4,431.2 223.9,431.8 M223.9,431.8 225.1,426.6 226.2,423.9 233.9,423.0 236.5,424.5 M204.0,398.2 207.2,398.5 212.6,395.3 216.3,395.0 216.3,400.5 219.1,402.8 223.4,404.3 226.2,405.8 229.9,406.6 230.8,414.0 235.9,414.0 236.2,417.0 238.4,419.7 237.6,422.1 236.5,424.5 M236.5,424.5 237.3,431.5 242.7,432.1 243.8,433.0 244.4,437.4 247.5,437.7 246.7,442.4 M223.9,431.8 228.5,436.7 234.7,439.9 238.2,442.1 235.3,447.5 241.3,448.1 243.0,447.8 246.7,442.4 M246.7,442.4 249.0,444.3 249.0,447.5 243.3,451.3 238.2,457.2 M238.2,457.2 242.7,459.2 245.6,460.8 249.0,463.2 250.7,465.5 250.1,468.9 M238.2,457.2 236.5,463.2 235.9,469.6 M210.9,433.6 210.6,437.4 207.4,438.9 207.2,444.6 205.2,448.4 203.5,453.9 202.9,459.8 201.5,464.8 203.2,469.9 201.8,475.1 200.0,480.4 200.0,487.6 197.8,493.2 197.8,502.7 198.6,510.6 197.2,518.8 194.4,527.3 192.9,533.9 196.3,536.2 197.2,540.8 202.9,540.8 207.4,542.6 M206.9,544.0 206.9,554.6 M364.5,284.9 377.3,284.9 377.3,281.7 387.8,277.5 391.8,274.2 398.6,270.5 397.2,265.8 395.7,260.3 M377.3,286.2 388.3,293.5 405.4,305.6 411.4,311.9 413.9,311.6 413.9,318.5 412.2,322.1 405.7,323.0 402.6,324.1 M353.6,305.9 365.0,305.0 365.0,299.7 367.9,298.2 367.9,290.4 377.3,290.4 377.3,286.2 M377.3,286.2 384.9,293.5 M384.9,293.5 383.5,294.1 386.4,319.4 386.9,322.4 M355.1,320.6 361.3,319.1 367.3,324.4 369.3,322.1 375.5,322.4 386.9,322.4 386.4,325.3 M367.3,324.4 369.6,331.5 363.0,330.9 354.5,331.5 M354.2,327.9 359.3,327.4 362.7,328.2 359.3,329.1 354.2,329.4 M359.3,335.5 363.0,333.5 363.0,330.9 M369.6,331.5 372.1,332.3 375.8,331.5 378.4,335.5 379.5,337.8 378.7,339.9 378.4,345.3 375.3,345.9 372.7,342.7 371.8,341.0 370.1,338.4 366.4,338.7 364.2,341.3 M369.3,347.3 371.8,343.3 372.7,342.7 M378.4,345.3 380.7,350.5 380.7,354.5 M378.7,339.9 379.5,337.8 384.4,336.4 386.4,337.3 386.4,325.3 389.8,329.1 393.5,327.7 396.3,326.2 400.0,323.5 402.6,324.1 405.7,328.5 408.3,330.9 408.8,332.9 M386.4,337.3 388.9,339.3 394.0,339.9 394.3,344.5 392.9,349.0 393.8,352.5 M394.0,339.9 393.8,335.5 400.3,335.5 401.7,335.2 404.6,335.5 403.4,338.4 403.7,343.3 403.4,347.3 405.4,349.6 M404.6,335.5 406.0,334.1 408.8,332.9 412.2,333.5 412.8,337.0 410.0,341.3 409.7,348.8 M412.2,333.5 412.2,329.7 413.7,328.2 417.6,327.1 421.6,329.7 427.0,330.0 429.6,328.8 436.1,329.1 440.7,327.7 440.4,325.3 446.1,318.2 447.5,307.7 444.7,299.7 M413.9,311.6 419.1,310.4 436.1,298.2 429.0,276.8 427.6,270.8 423.3,264.7 425.3,261.6 426.5,253.9 M429.0,276.8 431.3,271.8 434.7,266.8 M436.1,298.2 442.4,301.0 444.7,299.7 470.3,310.4 470.3,308.9 473.1,308.9 473.1,272.2 M473.1,302.8 491.3,302.8 491.6,302.2 507.0,302.8 M470.3,310.4 470.3,321.8 467.1,321.8 464.6,330.6 467.1,335.5 469.4,342.2 470.8,342.2 473.7,345.0 479.9,352.8 480.2,352.5 M440.7,327.7 442.1,329.7 442.4,331.5 444.7,332.3 445.0,336.1 441.8,338.4 446.1,339.0 443.0,341.3 445.2,345.6 443.5,349.9 443.0,354.2 445.0,356.2 447.8,360.7 448.1,362.2 M441.8,338.4 439.5,338.4 436.1,342.7 434.1,347.6 430.7,347.3 427.0,350.8 426.2,353.6 M429.9,360.5 434.1,360.7 434.1,364.2 428.7,364.2 M434.1,360.7 439.8,360.7 443.2,360.7 447.8,360.7 M443.0,354.2 448.9,354.2 454.9,354.8 454.9,357.0 452.6,364.2 452.3,368.4 448.1,373.3 448.1,377.0 443.0,381.0 440.1,381.0 438.1,379.8 436.1,381.2 M433.6,378.1 435.8,376.7 435.0,373.8 437.6,373.8 439.0,373.8 442.7,372.7 443.2,368.7 441.5,367.0 443.2,363.0 439.8,363.3 439.8,360.7 M454.9,354.8 457.5,352.5 465.7,355.3 471.4,352.5 479.9,352.8 M446.1,339.0 456.0,341.3 460.3,340.7 463.7,336.7 467.1,335.5 M480.2,352.5 485.9,354.5 489.9,357.0 M470.8,342.2 477.4,339.9 481.6,340.1 484.5,339.3 485.9,338.1 490.2,339.0 494.4,334.1 496.4,332.0 496.4,336.1 498.7,339.9 499.0,342.4 495.9,344.7 500.7,347.9 502.4,351.6 498.7,355.0 497.3,356.2 493.0,356.8 489.9,357.0 M499.0,342.4 499.6,336.7 501.8,333.2 504.7,330.6 505.5,325.6 509.8,324.1 511.2,315.2 M505.5,325.6 509.0,326.2 512.9,325.0 516.3,325.3 520.3,328.5 522.6,331.2 524.6,330.6 M522.6,331.2 520.9,335.5 524.0,335.5 524.9,334.1 M524.0,335.5 523.5,336.7 527.2,341.3 535.7,344.2 538.5,344.2 530.0,352.8 523.7,354.8 521.2,355.9 M538.5,344.2 541.4,334.6 M502.4,351.6 504.1,353.9 507.0,354.5 510.4,356.8 514.4,357.3 518.1,355.0 521.2,355.9 518.6,358.7 518.6,369.6 520.3,371.8 M498.7,355.0 500.1,356.5 501.6,361.6 499.0,365.9 498.4,369.8 509.0,375.5 509.2,377.0 513.5,380.4 M498.4,369.8 488.8,369.8 486.2,371.0 486.2,368.4 486.5,364.7 491.0,360.7 489.9,357.0 M488.8,369.8 489.6,373.8 488.5,373.5 487.0,374.7 484.5,374.7 486.2,371.0 M484.5,374.7 485.1,378.1 485.6,379.5 489.3,376.4 488.5,373.5 M489.3,376.4 489.6,373.8 M436.7,383.5 439.0,383.8 449.2,383.8 450.4,387.8 457.2,389.8 458.9,387.0 464.0,387.8 464.3,394.1 465.1,399.1 470.0,398.2 470.3,402.0 470.3,404.3 464.6,404.3 464.6,413.7 468.6,417.9 474.0,418.5 M470.3,402.0 474.0,399.1 478.5,401.1 480.2,402.0 484.5,405.5 486.8,405.5 486.8,402.0 482.8,401.1 483.4,393.6 489.6,390.7 485.6,379.5 M489.6,390.7 495.6,393.9 498.4,394.1 M495.6,393.9 496.7,397.9 496.7,402.8 495.0,406.1 496.4,407.2 487.9,409.6 488.5,411.9 484.5,413.1 478.8,418.8 474.0,418.5 M500.1,400.2 508.7,400.5 516.9,397.0 M500.1,400.2 499.8,402.0 501.6,403.1 503.8,409.0 503.8,413.1 502.1,415.8 499.6,413.1 500.1,409.0 496.4,407.2 M488.5,411.9 495.3,415.2 495.9,417.0 495.0,421.8 495.9,424.5 494.2,429.0 491.0,432.4 485.6,431.8 481.6,429.9 480.8,426.6 476.5,423.9 474.0,418.5 M491.0,432.4 492.7,438.6 493.0,443.3 492.7,446.2 495.6,446.2 M492.7,443.3 490.2,442.7 489.6,446.2 492.7,446.2 M485.6,431.8 482.5,433.3 478.8,436.1 475.4,442.4 472.3,442.1 467.4,441.4 461.2,446.5 458.9,439.9 458.9,431.2 461.7,431.2 461.7,420.0 468.6,417.9 M458.9,439.9 458.9,451.3 456.0,452.9 451.5,452.3 448.9,452.0 M435.6,417.0 440.4,416.1 442.4,417.3 454.3,417.3 455.8,418.5 462.9,419.1 468.6,417.9 M478.8,455.2 481.6,452.9 485.3,453.6 485.6,456.2 482.2,457.5 479.7,457.5 478.8,455.2 M501.3,279.1 499.6,273.5 M501.3,279.1 504.4,280.1 508.7,277.5 507.2,272.5 512.9,270.8 513.5,269.8 512.4,266.1 M512.9,270.8 516.9,271.2 521.5,273.8 529.1,280.1 534.3,280.4 537.7,282.4 539.7,282.4 M512.4,266.1 518.6,262.7 519.5,255.7 522.6,253.2 529.4,252.9 528.0,244.9 529.4,243.8 526.3,242.3 525.7,238.5 520.0,237.0 M505.0,254.6 506.4,254.3 510.7,253.9 514.6,254.6 519.5,253.2 522.6,253.2 M529.4,252.9 531.1,257.1 533.4,259.9 531.4,264.1 533.1,267.5 538.2,271.5 537.7,274.5 540.2,277.8 M529.4,243.8 534.3,246.7 538.5,243.8 541.1,248.5 M555.3,252.5 561.9,249.6 564.7,248.9 570.4,251.8 576.1,255.0 574.1,262.3 575.2,272.5 577.8,274.2 575.2,278.1 579.8,279.4 582.1,286.5 580.6,288.5 577.2,292.9 M575.2,278.1 579.8,279.4 590.6,277.8 590.9,274.5 599.1,271.2 602.0,266.4 600.8,264.1 604.2,262.7 605.7,256.1 612.5,254.3 615.0,252.9 M576.1,255.0 579.8,259.6 585.5,256.1 591.2,252.1 595.4,253.6 599.1,253.2 601.7,251.4 605.7,254.6 615.0,252.9 M551.3,235.9 555.6,234.0 559.9,237.8 564.1,237.8 568.7,232.0 572.7,234.4 578.1,238.5 579.5,242.7 584.6,246.7 591.2,252.1 M561.3,237.8 561.3,223.4 568.7,220.9 576.1,226.6 586.6,228.5 590.0,231.3 589.7,235.1 595.7,239.7 602.5,235.1 604.0,234.0 M541.4,217.2 540.0,213.5 535.7,209.7 534.3,209.3 537.1,200.5 540.5,202.7 546.5,194.2 557.0,197.8 566.4,197.4 571.5,200.1 576.6,198.7 572.7,193.2 575.5,184.3 587.5,182.3 596.0,178.9 603.4,177.4 604.5,183.3 610.8,186.2 619.6,182.8 623.6,187.1 629.6,198.7 639.2,197.8 644.6,204.0 650.3,205.8 M650.3,205.8 646.1,209.3 645.2,214.8 638.1,214.3 636.1,221.3 629.3,223.8 630.1,234.4 M604.0,234.0 611.1,231.3 613.3,230.5 617.6,231.7 627.3,232.0 630.1,234.4 625.0,237.4 620.7,238.9 611.9,244.5 611.4,245.6 615.0,248.2 615.0,252.9 M604.0,234.0 601.7,237.0 605.9,237.0 609.9,239.7 602.8,241.9 602.2,244.1 611.4,245.6 M595.4,253.6 596.6,249.3 593.7,245.6 596.8,244.5 602.8,241.9 M615.0,252.9 617.9,255.0 623.3,258.9 626.4,262.7 625.9,268.8 628.1,274.2 632.7,276.8 629.8,281.4 633.0,282.7 638.9,285.9 644.6,288.1 652.6,288.8 652.6,284.3 654.6,284.0 654.9,286.2 657.4,288.1 663.7,287.8 664.0,284.6 671.4,279.8 675.6,279.8 678.8,283.0 679.0,284.3 M632.7,276.8 635.5,276.5 641.2,281.1 646.6,284.0 652.6,284.3 M654.9,286.2 657.4,283.3 662.8,284.0 664.0,284.6 M615.0,252.9 612.5,254.3 M623.3,258.9 620.5,261.6 613.3,261.3 612.5,266.8 616.5,269.8 613.9,274.2 610.8,277.8 604.0,284.0 600.0,286.5 602.2,291.3 604.0,295.4 597.7,295.7 596.0,297.6 M652.6,288.8 653.4,291.6 652.9,293.8 654.3,295.7 654.0,299.1 655.2,302.5 655.2,303.4 M653.4,291.6 657.4,290.4 657.4,292.6 664.8,293.5 663.7,295.4 661.4,298.2 663.4,298.5 665.4,302.8 664.5,305.9 M665.4,302.8 667.1,301.9 667.7,296.6 671.4,291.9 672.8,288.5 677.9,284.9 679.0,284.3 M679.0,284.3 682.7,285.6 682.7,290.7 679.3,294.5 679.3,297.0 683.3,299.1 684.2,302.5 687.0,304.7 689.9,305.3 691.6,301.3 692.4,301.6 695.0,301.3 701.5,298.8 705.5,300.1 705.2,302.8 709.2,304.4 M687.0,304.7 686.7,307.7 683.3,309.5 680.2,313.1 679.0,313.4 683.3,319.7 681.3,323.5 684.2,327.7 683.9,333.5 683.0,336.4 682.7,337.8 M686.7,307.7 687.9,310.4 690.1,310.1 689.3,315.2 692.4,314.3 696.1,313.7 699.8,316.4 700.1,319.7 702.4,321.8 701.2,325.9 707.8,324.7 M692.4,301.6 693.8,303.7 697.8,307.7 700.4,311.9 704.9,317.9 707.8,323.8 707.8,324.7 708.1,331.7 703.2,333.8 699.0,337.3 M701.2,325.9 698.7,325.6 694.7,326.2 693.3,327.9 694.7,333.5 M686.7,348.8 689.6,350.8 691.6,350.5 692.4,349.3 M713.8,361.6 716.3,364.4 720.0,364.2 722.0,362.7 725.4,363.3 728.8,361.6 729.4,359.0 730.8,357.3 731.7,354.5 736.5,355.0 M803.1,374.4 803.1,393.0 M754.7,393.6 757.8,392.7 757.6,394.1 M650.3,205.8 651.7,205.8 652.3,208.4 658.0,211.4 660.8,216.8 660.6,222.1 668.0,223.8 673.4,226.2 676.2,232.4 690.7,233.2 699.2,235.5 700.7,236.7 716.0,232.0 720.3,228.5 718.9,225.8 725.1,224.6 732.0,219.3 735.9,216.8 742.5,216.8 743.0,215.6 739.1,211.0 733.9,203.2 M651.7,205.8 657.1,202.7 664.8,198.7 670.2,199.6 678.8,203.6 681.6,200.1 680.8,195.5 683.6,193.2 692.7,196.5 693.0,199.6 705.5,201.0 710.6,205.4 716.9,206.2 724.0,203.2 728.3,201.4 733.9,203.2 M733.9,203.2 737.1,204.5 741.3,199.6 745.6,190.5 753.6,186.2 759.3,188.1 765.0,201.4 773.5,207.1 774.6,212.2 780.6,210.5 785.1,209.3 780.9,223.0 774.9,223.8 775.5,229.3 773.5,233.6 M773.5,233.6 771.5,231.3 768.6,235.1 766.1,235.1 763.0,235.9 755.8,242.3 M762.4,250.7 767.2,247.8 M482.2,86.6 484.5,92.3 483.1,98.5 487.3,102.3 484.5,108.2 487.6,116.7 486.8,122.8 489.0,127.4 487.3,130.0 491.9,135.1 481.1,149.5 M460.3,91.5 469.4,100.8 468.8,106.0 470.3,108.9 470.8,116.0 M460.3,91.5 458.9,97.0 453.5,96.2 448.1,103.8 443.2,113.9 441.0,124.2 436.7,130.7 436.7,146.6 437.8,151.8 435.6,156.3 433.9,157.4 M460.3,91.5 463.7,89.9 472.3,95.4 476.0,86.6 481.6,83.3 482.2,86.6 489.6,85.8" fill="none" stroke="#c0709a" stroke-opacity=".5" stroke-width=".8"/><g stroke="#1a24dc" stroke-width="2" fill="#f22"><circle cx="378.8" cy="196.0" r="9" fill-opacity="0.35" stroke-opacity="0.74"/><circle cx="404.3" cy="197.9" r="9" fill-opacity="0.35" stroke-opacity="0.74"/><circle cx="416.4" cy="197.9" r="9" fill-opacity="0.35" stroke-opacity="0.74"/><circle cx="458.7" cy="203.0" r="9" fill-opacity="0.35" stroke-opacity="0.74"/><circle cx="475.5" cy="225.0" r="9" fill-opacity="0.35" stroke-opacity="0.74"/><circle cx="530.7" cy="264.0" r="9" fill-opacity="0.35" stroke-opacity="0.74"/><circle cx="54.9" cy="194.7" r="8.7" fill-opacity=".95" stroke-width="2.6"/><circle cx="153.0" cy="238.8" r="9" fill-opacity="0.35" stroke-opacity="0.74"/><circle cx="123.9" cy="260.7" r="9" fill-opacity="0.35" stroke-opacity="0.74"/><circle cx="85.9" cy="274.9" r="8.7" fill-opacity=".95" stroke-width="2.6"/><circle cx="123.9" cy="286.6" r="9" fill-opacity="0.6" stroke-opacity="0.9"/><circle cx="124.9" cy="285.2" r="9" fill-opacity="0.6" stroke-opacity="0.9"/><circle cx="126.0" cy="283.8" r="9" fill-opacity="0.6" stroke-opacity="0.9"/><circle cx="127.0" cy="282.4" r="9" fill-opacity="0.6" stroke-opacity="0.9"/><circle cx="128.6" cy="280.4" r="8.7" fill-opacity=".95" stroke-width="2.6"/><circle cx="171.2" cy="296.2" r="9" fill-opacity="0.5" stroke-opacity="0.85"/><circle cx="103.9" cy="312.5" r="9" fill-opacity="0.35" stroke-opacity="0.74"/><circle cx="129.3" cy="324.1" r="9" fill-opacity="0.35" stroke-opacity="0.74"/><circle cx="122.1" cy="313.8" r="9" fill-opacity="0.5" stroke-opacity="0.85"/><circle cx="150.8" cy="314.8" r="9" fill-opacity="0.68" stroke-opacity="0.95"/><circle cx="153.6" cy="327.5" r="9" fill-opacity="0.35" stroke-opacity="0.74"/><circle cx="155.5" cy="330.7" r="9" fill-opacity="0.5" stroke-opacity="0.85"/><circle cx="157.4" cy="334.6" r="9" fill-opacity="0.5" stroke-opacity="0.85"/><circle cx="194.0" cy="315.0" r="9" fill-opacity="0.6" stroke-opacity="0.9"/><circle cx="195.0" cy="313.6" r="9" fill-opacity="0.6" stroke-opacity="0.9"/><circle cx="196.1" cy="312.2" r="9" fill-opacity="0.6" stroke-opacity="0.9"/><circle cx="197.1" cy="310.8" r="9" fill-opacity="0.6" stroke-opacity="0.9"/><circle cx="196.2" cy="315.3" r="8.7" fill-opacity=".95" stroke-width="2.6"/><circle cx="194.9" cy="335.9" r="9" fill-opacity="0.5" stroke-opacity="0.85"/><circle cx="189.3" cy="345.3" r="9" fill-opacity="0.35" stroke-opacity="0.74"/><circle cx="191.1" cy="355.6" r="9" fill-opacity="0.5" stroke-opacity="0.85"/><circle cx="237.1" cy="349.6" r="8.7" fill-opacity=".95" stroke-width="2.6"/><circle cx="172.0" cy="383.5" r="9" fill-opacity="0.6" stroke-opacity="0.9"/><circle cx="173.0" cy="382.1" r="9" fill-opacity="0.6" stroke-opacity="0.9"/><circle cx="174.1" cy="380.7" r="9" fill-opacity="0.6" stroke-opacity="0.9"/><circle cx="175.1" cy="379.3" r="9" fill-opacity="0.6" stroke-opacity="0.9"/><circle cx="173.3" cy="382.0" r="8.7" fill-opacity=".95" stroke-width="2.6"/><circle cx="175.2" cy="370.6" r="8.7" fill-opacity=".95" stroke-width="2.6"/><circle cx="178.0" cy="373.4" r="8.7" fill-opacity=".95" stroke-width="2.6"/><circle cx="174.0" cy="376.0" r="8.7" fill-opacity=".95" stroke-width="2.6"/><circle cx="193.0" cy="380.0" r="9" fill-opacity="0.35" stroke-opacity="0.74"/><circle cx="199.6" cy="380.9" r="8.7" fill-opacity=".95" stroke-width="2.6"/><circle cx="203.3" cy="380.9" r="8.7" fill-opacity=".95" stroke-width="2.6"/><circle cx="184.9" cy="406.5" r="8.7" fill-opacity=".95" stroke-width="2.6"/><circle cx="351.8" cy="326.9" r="9" fill-opacity="0.35" stroke-opacity="0.74"/><circle cx="368.6" cy="326.9" r="9" fill-opacity="0.35" stroke-opacity="0.74"/><circle cx="364.9" cy="334.4" r="9" fill-opacity="0.35" stroke-opacity="0.74"/><circle cx="369.6" cy="348.4" r="9" fill-opacity="0.35" stroke-opacity="0.74"/><circle cx="377.0" cy="332.5" r="9" fill-opacity="0.5" stroke-opacity="0.85"/><circle cx="384.6" cy="331.6" r="9" fill-opacity="0.5" stroke-opacity="0.85"/><circle cx="392.0" cy="332.5" r="9" fill-opacity="0.5" stroke-opacity="0.85"/><circle cx="396.8" cy="332.5" r="9" fill-opacity="0.35" stroke-opacity="0.74"/><circle cx="408.9" cy="351.3" r="9" fill-opacity="0.35" stroke-opacity="0.74"/><circle cx="423.0" cy="349.4" r="9" fill-opacity="0.35" stroke-opacity="0.74"/><circle cx="396.8" cy="341.9" r="9" fill-opacity="0.68" stroke-opacity="0.95"/><circle cx="401.0" cy="343.0" r="8.7" fill-opacity=".95" stroke-width="2.6"/><circle cx="406.1" cy="341.9" r="8.7" fill-opacity=".95" stroke-width="2.6"/><circle cx="421.1" cy="329.7" r="9" fill-opacity="0.68" stroke-opacity="0.95"/><circle cx="424.9" cy="337.2" r="9" fill-opacity="0.5" stroke-opacity="0.85"/><circle cx="423.0" cy="332.5" r="8.7" fill-opacity=".95" stroke-width="2.6"/><circle cx="438.0" cy="334.4" r="9" fill-opacity="0.5" stroke-opacity="0.85"/><circle cx="492.4" cy="359.7" r="9" fill-opacity="0.5" stroke-opacity="0.85"/><circle cx="481.1" cy="342.8" r="8.7" fill-opacity=".95" stroke-width="2.6"/><circle cx="497.1" cy="343.4" r="8.7" fill-opacity=".95" stroke-width="2.6"/><circle cx="481.1" cy="375.6" r="9" fill-opacity="0.5" stroke-opacity="0.85"/><circle cx="517.7" cy="379.4" r="9" fill-opacity="0.35" stroke-opacity="0.74"/><circle cx="512.0" cy="385.0" r="9" fill-opacity="0.5" stroke-opacity="0.85"/><circle cx="506.4" cy="390.6" r="9" fill-opacity="0.5" stroke-opacity="0.85"/><circle cx="513.0" cy="392.5" r="9" fill-opacity="0.5" stroke-opacity="0.85"/><circle cx="494.3" cy="379.4" r="9" fill-opacity="0.6" stroke-opacity="0.9"/><circle cx="495.3" cy="378.0" r="9" fill-opacity="0.6" stroke-opacity="0.9"/><circle cx="496.4" cy="376.6" r="9" fill-opacity="0.6" stroke-opacity="0.9"/><circle cx="497.4" cy="375.2" r="9" fill-opacity="0.6" stroke-opacity="0.9"/><circle cx="488.0" cy="376.0" r="9" fill-opacity="0.6" stroke-opacity="0.9"/><circle cx="489.0" cy="374.6" r="9" fill-opacity="0.6" stroke-opacity="0.9"/><circle cx="490.1" cy="373.2" r="9" fill-opacity="0.6" stroke-opacity="0.9"/><circle cx="491.1" cy="371.8" r="9" fill-opacity="0.6" stroke-opacity="0.9"/><circle cx="484.9" cy="369.1" r="8.7" fill-opacity=".95" stroke-width="2.6"/><circle cx="498.0" cy="370.0" r="8.7" fill-opacity=".95" stroke-width="2.6"/><circle cx="510.2" cy="371.9" r="8.7" fill-opacity=".95" stroke-width="2.6"/><circle cx="501.0" cy="377.0" r="8.7" fill-opacity=".95" stroke-width="2.6"/><circle cx="511.1" cy="402.8" r="9" fill-opacity="0.35" stroke-opacity="0.74"/><circle cx="498.0" cy="402.8" r="9" fill-opacity="0.35" stroke-opacity="0.74"/><circle cx="524.3" cy="401.9" r="8.7" fill-opacity=".95" stroke-width="2.6"/><circle cx="480.2" cy="401.9" r="8.7" fill-opacity=".95" stroke-width="2.6"/><circle cx="477.4" cy="415.0" r="9" fill-opacity="0.6" stroke-opacity="0.9"/><circle cx="478.4" cy="413.6" r="9" fill-opacity="0.6" stroke-opacity="0.9"/><circle cx="479.5" cy="412.2" r="9" fill-opacity="0.6" stroke-opacity="0.9"/><circle cx="480.5" cy="410.8" r="9" fill-opacity="0.6" stroke-opacity="0.9"/><circle cx="481.1" cy="411.3" r="8.7" fill-opacity=".95" stroke-width="2.6"/><circle cx="482.7" cy="413.1" r="8.7" fill-opacity=".95" stroke-width="2.6"/><circle cx="478.0" cy="425.3" r="9" fill-opacity="0.6" stroke-opacity="0.9"/><circle cx="479.0" cy="423.9" r="9" fill-opacity="0.6" stroke-opacity="0.9"/><circle cx="480.1" cy="422.5" r="9" fill-opacity="0.6" stroke-opacity="0.9"/><circle cx="481.1" cy="421.1" r="9" fill-opacity="0.6" stroke-opacity="0.9"/><circle cx="492.1" cy="424.4" r="8.7" fill-opacity=".95" stroke-width="2.6"/><circle cx="485.0" cy="419.0" r="8.7" fill-opacity=".95" stroke-width="2.6"/><circle cx="471.4" cy="441.3" r="9" fill-opacity="0.5" stroke-opacity="0.85"/><circle cx="478.9" cy="444.0" r="9" fill-opacity="0.5" stroke-opacity="0.85"/><circle cx="485.5" cy="445.0" r="9" fill-opacity="0.5" stroke-opacity="0.85"/><circle cx="494.9" cy="445.0" r="8.7" fill-opacity=".95" stroke-width="2.6"/><circle cx="487.4" cy="458.1" r="9" fill-opacity="0.35" stroke-opacity="0.74"/><circle cx="482.7" cy="456.3" r="9" fill-opacity="0.68" stroke-opacity="0.95"/><circle cx="474.8" cy="470.3" r="9" fill-opacity="0.5" stroke-opacity="0.85"/><circle cx="454.9" cy="471.6" r="9" fill-opacity="0.5" stroke-opacity="0.85"/><circle cx="605.8" cy="257.5" r="9" fill-opacity="0.35" stroke-opacity="0.74"/><circle cx="608.9" cy="268.8" r="9" fill-opacity="0.68" stroke-opacity="0.95"/><circle cx="626.8" cy="279.1" r="9" fill-opacity="0.35" stroke-opacity="0.74"/><circle cx="628.6" cy="284.1" r="9" fill-opacity="0.5" stroke-opacity="0.85"/><circle cx="648.3" cy="280.9" r="9" fill-opacity="0.35" stroke-opacity="0.74"/><circle cx="636.1" cy="284.1" r="8.7" fill-opacity=".95" stroke-width="2.6"/><circle cx="641.8" cy="285.6" r="9" fill-opacity="0.6" stroke-opacity="0.9"/><circle cx="642.8" cy="284.2" r="9" fill-opacity="0.6" stroke-opacity="0.9"/><circle cx="643.9" cy="282.8" r="9" fill-opacity="0.6" stroke-opacity="0.9"/><circle cx="645.0" cy="281.4" r="9" fill-opacity="0.6" stroke-opacity="0.9"/><circle cx="647.4" cy="289.4" r="8.7" fill-opacity=".95" stroke-width="2.6"/><circle cx="651.0" cy="286.0" r="8.7" fill-opacity=".95" stroke-width="2.6"/><circle cx="656.8" cy="287.1" r="8.7" fill-opacity=".95" stroke-width="2.6"/><circle cx="654.9" cy="306.3" r="9" fill-opacity="0.6" stroke-opacity="0.9"/><circle cx="656.0" cy="304.9" r="9" fill-opacity="0.6" stroke-opacity="0.9"/><circle cx="657.0" cy="303.5" r="9" fill-opacity="0.6" stroke-opacity="0.9"/><circle cx="658.1" cy="302.1" r="9" fill-opacity="0.6" stroke-opacity="0.9"/><circle cx="660.5" cy="300.6" r="8.7" fill-opacity=".95" stroke-width="2.6"/><circle cx="665.2" cy="305.3" r="8.7" fill-opacity=".95" stroke-width="2.6"/><circle cx="683.0" cy="318.4" r="9" fill-opacity="0.35" stroke-opacity="0.74"/><circle cx="671.8" cy="322.2" r="9" fill-opacity="0.6" stroke-opacity="0.9"/><circle cx="672.8" cy="320.8" r="9" fill-opacity="0.6" stroke-opacity="0.9"/><circle cx="673.9" cy="319.4" r="9" fill-opacity="0.6" stroke-opacity="0.9"/><circle cx="675.0" cy="318.0" r="9" fill-opacity="0.6" stroke-opacity="0.9"/><circle cx="674.0" cy="320.5" r="8.7" fill-opacity=".95" stroke-width="2.6"/><circle cx="677.8" cy="319.4" r="8.7" fill-opacity=".95" stroke-width="2.6"/><circle cx="695.2" cy="331.0" r="8.7" fill-opacity=".95" stroke-width="2.6"/><circle cx="693.5" cy="331.5" r="9" fill-opacity="0.6" stroke-opacity="0.9"/><circle cx="694.5" cy="330.1" r="9" fill-opacity="0.6" stroke-opacity="0.9"/><circle cx="695.6" cy="328.7" r="9" fill-opacity="0.6" stroke-opacity="0.9"/><circle cx="696.7" cy="327.3" r="9" fill-opacity="0.6" stroke-opacity="0.9"/><circle cx="711.1" cy="324.6" r="8.7" fill-opacity=".95" stroke-width="2.6"/><circle cx="629.6" cy="352.2" r="9" fill-opacity="0.6" stroke-opacity="0.9"/><circle cx="630.6" cy="350.8" r="9" fill-opacity="0.6" stroke-opacity="0.9"/><circle cx="631.7" cy="349.4" r="9" fill-opacity="0.6" stroke-opacity="0.9"/><circle cx="632.8" cy="348.0" r="9" fill-opacity="0.6" stroke-opacity="0.9"/><circle cx="629.9" cy="347.5" r="8.7" fill-opacity=".95" stroke-width="2.6"/><circle cx="629.9" cy="340.9" r="8.7" fill-opacity=".95" stroke-width="2.6"/><circle cx="748.1" cy="274.8" r="9" fill-opacity="0.35" stroke-opacity="0.74"/><circle cx="744.9" cy="297.8" r="9" fill-opacity="0.35" stroke-opacity="0.74"/><circle cx="773.9" cy="270.6" r="9" fill-opacity="0.6" stroke-opacity="0.9"/><circle cx="775.0" cy="269.2" r="9" fill-opacity="0.6" stroke-opacity="0.9"/><circle cx="776.0" cy="267.8" r="9" fill-opacity="0.6" stroke-opacity="0.9"/><circle cx="777.1" cy="266.4" r="9" fill-opacity="0.6" stroke-opacity="0.9"/><circle cx="775.8" cy="266.9" r="8.7" fill-opacity=".95" stroke-width="2.6"/><circle cx="690.9" cy="214.9" r="9" fill-opacity="0.38" stroke-opacity="0.8"/><circle cx="707.4" cy="213.8" r="9" fill-opacity="0.38" stroke-opacity="0.8"/><circle cx="758.0" cy="352.5" r="9" fill-opacity="0.5" stroke-opacity="0.85"/><circle cx="743.9" cy="327.8" r="9" fill-opacity="0.35" stroke-opacity="0.74"/><circle cx="748.6" cy="328.8" r="9" fill-opacity="0.5" stroke-opacity="0.85"/><circle cx="754.3" cy="340.0" r="9" fill-opacity="0.6" stroke-opacity="0.9"/><circle cx="755.3" cy="338.6" r="9" fill-opacity="0.6" stroke-opacity="0.9"/><circle cx="756.4" cy="337.2" r="9" fill-opacity="0.6" stroke-opacity="0.9"/><circle cx="757.5" cy="335.8" r="9" fill-opacity="0.6" stroke-opacity="0.9"/><circle cx="752.4" cy="331.6" r="8.7" fill-opacity=".95" stroke-width="2.6"/><circle cx="758.0" cy="334.4" r="8.7" fill-opacity=".95" stroke-width="2.6"/><circle cx="755.0" cy="337.0" r="8.7" fill-opacity=".95" stroke-width="2.6"/><circle cx="682.0" cy="359.2" r="9" fill-opacity="0.5" stroke-opacity="0.85"/><circle cx="703.9" cy="387.4" r="8.7" fill-opacity=".95" stroke-width="2.6"/><circle cx="702.0" cy="387.4" r="9" fill-opacity="0.6" stroke-opacity="0.9"/><circle cx="703.0" cy="386.0" r="9" fill-opacity="0.6" stroke-opacity="0.9"/><circle cx="704.1" cy="384.6" r="9" fill-opacity="0.6" stroke-opacity="0.9"/><circle cx="705.2" cy="383.2" r="9" fill-opacity="0.6" stroke-opacity="0.9"/><circle cx="712.4" cy="389.7" r="9" fill-opacity="0.68" stroke-opacity="0.95"/><circle cx="726.4" cy="392.1" r="8.7" fill-opacity=".95" stroke-width="2.6"/><circle cx="742.8" cy="379.8" r="9" fill-opacity="0.68" stroke-opacity="0.95"/><circle cx="757.8" cy="393.8" r="9" fill-opacity="0.45" stroke-opacity="0.85" fill="#fc0"/><circle cx="764.9" cy="425.7" r="9" fill-opacity="0.35" stroke-opacity="0.74"/><circle cx="818.1" cy="486.8" r="9" fill-opacity="0.5" stroke-opacity="0.85"/></g><circle cx="447.8" cy="332.5" r="9" fill="#f22" fill-opacity=".85" stroke="#f30" stroke-opacity=".8" stroke-width="2"/></svg>
<div class="ctl" style="top:10px;height:45px"><div><svg width="22" height="22"><path d="M6 11h10M11 6v10" stroke="#4b3f9a" stroke-width="2"/></svg></div><div><svg width="22" height="22"><path d="M7.5 11h7" stroke="#4b3f9a" stroke-width="2"/></svg></div></div>
<div class="ctl c2" style="top:65px;height:115px">
 <div><svg width="22" height="22"><circle cx="12.6" cy="9.8" r="3" fill="none" stroke="#111" stroke-width="1.6"/><path d="M10.4 12.1L7.2 15.2" stroke="#111" stroke-width="2.2" stroke-linecap="round"/></svg></div>
 <div><svg width="22" height="22"><circle cx="11" cy="11.5" r="3" fill="none" stroke="#111" stroke-width="1.15"/></svg></div>
 <div><svg width="22" height="22"><rect x="6.5" y="7.5" width="9.5" height="7" rx="1" fill="#fff" stroke="#777" stroke-width="1"/><path d="M8 13.5l2-3.5 1.5 2 1-1.2 2 2.7z" fill="#888"/></svg></div>
 <div><svg width="22" height="22"><path d="M7.5 8v6M9.5 11h5M12 8.7L9.7 11l2.3 2.3" stroke="#111" stroke-width="1.4" fill="none"/></svg></div>
 <div><svg width="22" height="22"><circle cx="11" cy="11" r="3.4" fill="none" stroke="#111" stroke-width="1.3"/><path d="M8.7 13.3l4.6-4.6" stroke="#111" stroke-width="1.3"/></svg></div>
</div>
<div id="srch"><svg style="position:absolute;right:4px;top:3px" width="14" height="14"><circle cx="8.5" cy="5.5" r="3.2" fill="none" stroke="#555" stroke-width="1.3"/><path d="M6.3 8L3 11.5" stroke="#555" stroke-width="1.6"/></svg></div>
<div id="pop"><div class="x">×</div>
 <h2>Way <a>431469810</a></h2>
 <h3 style="top:59.2px">Tags:</h3>
 <p style="top:89.5px">building=yes<br>name=building</p>
 <h3 style="top:137.3px">Meta:</h3>
 <p style="top:168.1px;letter-spacing:0.12px">timestamp=2016-11-16T17:36:54Z<br>version=2<br>changeset=<a>43705438</a><br>user=<a>Miteshg912</a><br>uid=4853389</p>
</div>
<svg style="position:absolute;left:436px;top:317px" width="22" height="11"><path d="M0.5,0L11,10.5L21.5,0Z" fill="rgba(255,255,255,0.9)"/></svg>
<div id="scale">3000 km</div>
<div id="stats"><small>Загружено</small> – точки: 14251, линии: 2330, отношения: 5<br><small>Отображено</small> – POI: 16, линии: 0, полигоны: 2325</div>
</div></div>
</body></html>
